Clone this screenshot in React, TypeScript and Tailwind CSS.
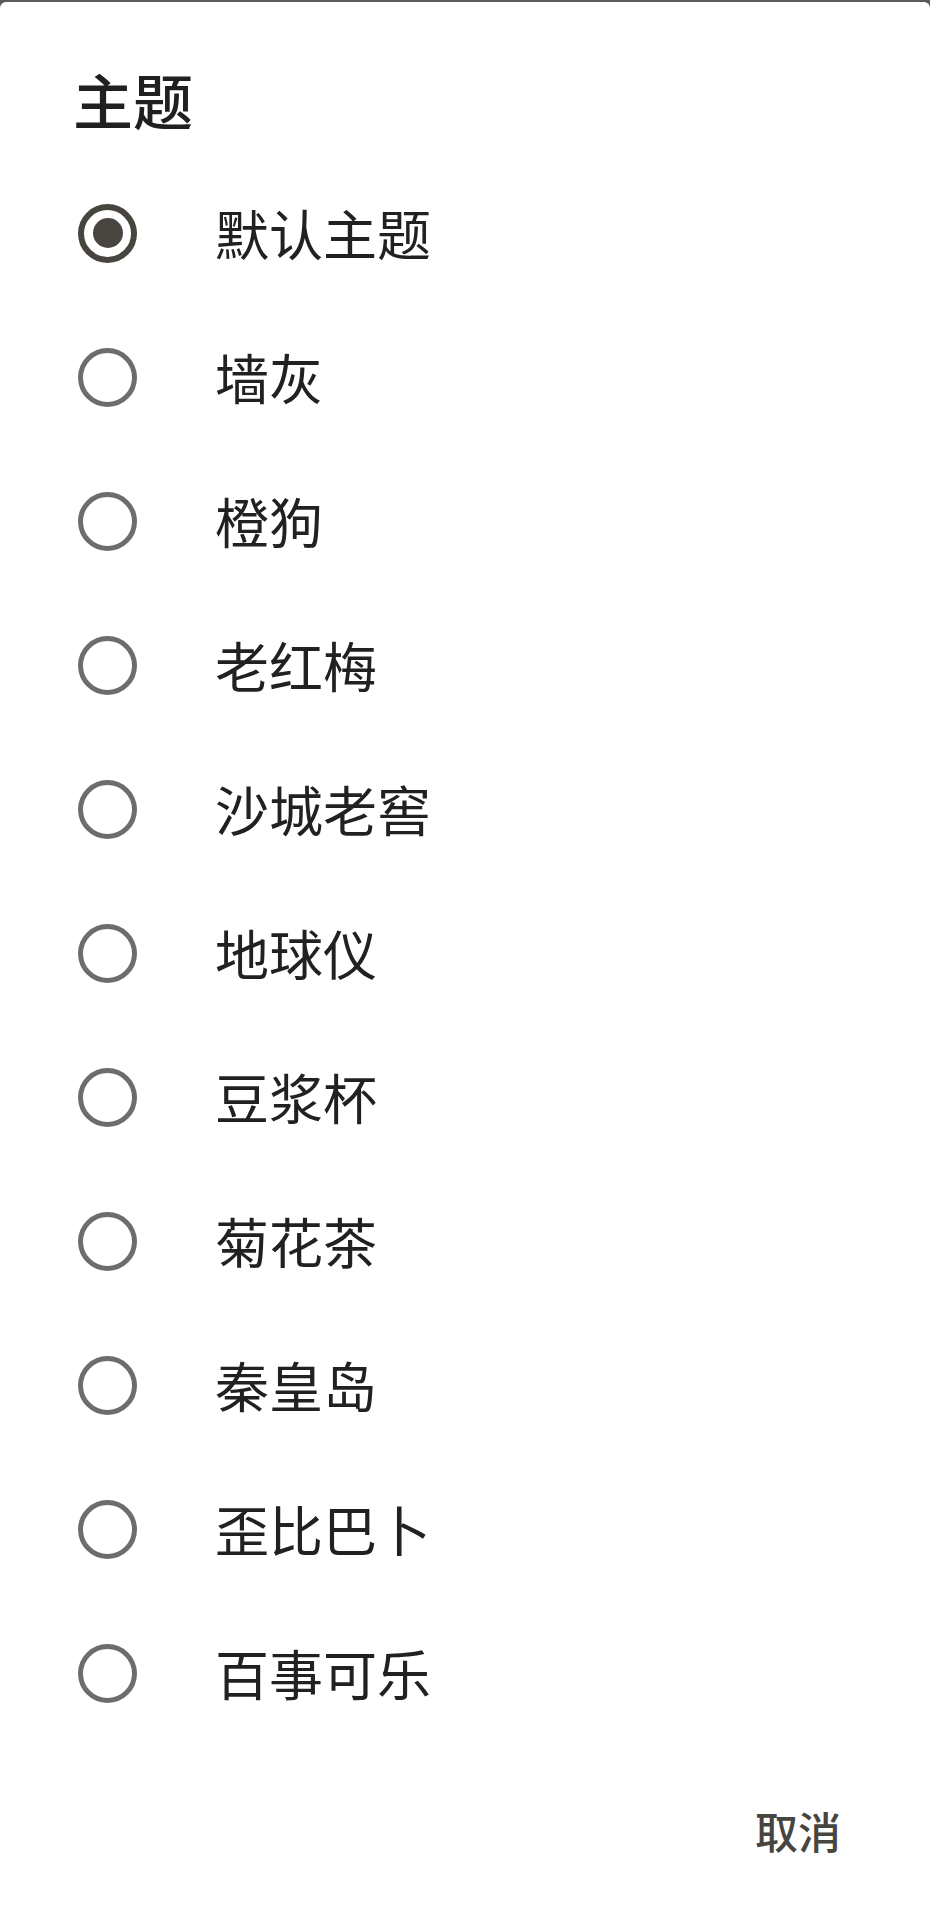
import React from "react";

const items = [
  "默认主题",
  "墙灰",
  "橙狗",
  "老红梅",
  "沙城老窖",
  "地球仪",
  "豆浆杯",
  "菊花茶",
  "秦皇岛",
  "歪比巴卜",
  "百事可乐",
];

export default function App() {
  const font = { fontFamily: '"Noto Sans CJK SC", "Noto Sans", sans-serif' };
  return (
    <div className="w-[930px] h-[1905px] bg-[#5a5a5a] pt-[2px] overflow-hidden" style={font}>
      <div className="h-[1903px] bg-white rounded-t-[6px] flex flex-col">
        <div className="pl-[73px] pt-[66.5px] text-[60px] leading-[60px] font-medium text-[#202020]">
          主题
        </div>
        <div className="mt-[32.5px] flex flex-col">
          {items.map((label, i) => (
            <div key={label} className="h-[144px] flex items-center pl-[78px]">
              {i === 0 ? (
                <div className="w-[59px] h-[59px] rounded-full border-[6px] border-[#48443f] flex items-center justify-center shrink-0">
                  <div className="w-[30px] h-[30px] rounded-full bg-[#48443f]" />
                </div>
              ) : (
                <div className="w-[59px] h-[59px] rounded-full border-[5.5px] border-[#6d6d6d] shrink-0" />
              )}
              <div className="ml-[78px] text-[54px] leading-[54px] text-[#212121]">{label}</div>
            </div>
          ))}
        </div>
        <div className="flex justify-end pr-[89px] mt-[63.5px]">
          <div className="text-[43px] leading-[43px] font-medium text-[#48443f]">取消</div>
        </div>
      </div>
    </div>
  );
}
